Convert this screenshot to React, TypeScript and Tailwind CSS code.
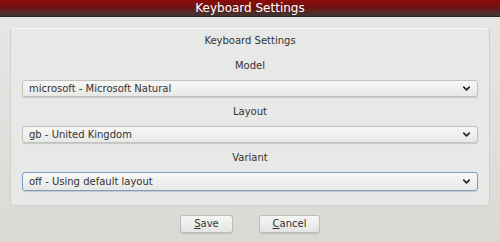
import { ChevronDown } from 'lucide-react';

const font = { fontFamily: '"DejaVu Sans", "Liberation Sans", sans-serif' };

function Select({ value, focused = false }: { value: string; focused?: boolean }) {
  return (
    <div
      className={`flex items-center justify-between rounded-[3px] bg-gradient-to-b from-[#f7f7f6] to-[#e8e8e7] pl-[6px] pr-[5px] shadow-[0_1px_1px_rgba(0,0,0,0.15)] ${
        focused ? 'border-[1.5px] border-[#7a9cc8] h-[19px]' : 'border border-[#c2c2c0] h-[17px]'
      }`}
    >
      <span className="text-[10px] leading-none text-[#333]">{value}</span>
      <ChevronDown className="w-[11px] h-[11px] text-[#222]" strokeWidth={3.5} />
    </div>
  );
}

function Label({ text }: { text: string }) {
  return (
    <div className="h-[29px] flex items-center justify-center text-[10px] text-[#333]">{text}</div>
  );
}

function Button({ first, rest }: { first: string; rest: string }) {
  return (
    <button className="h-[18px] rounded-[3px] border border-[#bdbdbb] bg-gradient-to-b from-[#f6f6f5] to-[#e4e4e3] text-[10px] leading-none text-[#333] shadow-[0_1px_1px_rgba(0,0,0,0.12)]">
      <span className="underline">{first}</span>
      {rest}
    </button>
  );
}

export default function App() {
  return (
    <div className="w-[500px] h-[242px] flex flex-col bg-[#dcdbd8]" style={font}>
      {/* Title bar */}
      <div className="h-[17px] flex items-center justify-center bg-gradient-to-b from-[#8e0a0a] via-[#6a1212] to-[#3b3434] border-b border-[#2a2626] text-[12px] text-white leading-none">
        Keyboard Settings
      </div>

      <div className="flex-1 flex flex-col bg-gradient-to-b from-[#e6e6e4] to-[#dad9d6] pt-[11px] px-[10px]">
        {/* Settings panel */}
        <div className="rounded-[3px] border border-[#cfcfcd] border-t-[#f4f4f3] bg-[#e8e8e7] px-[11px] pb-[14px]">
          <div className="h-[22px] flex justify-center pt-[4px] text-[10px] text-[#333]">
            Keyboard Settings
          </div>
          <Label text="Model" />
          <Select value="microsoft - Microsoft Natural" />
          <Label text="Layout" />
          <Select value="gb - United Kingdom" />
          <Label text="Variant" />
          <Select value="off - Using default layout" focused />
        </div>

        <div className="flex justify-center gap-[26px] mt-[9px]">
          <div className="w-[53px] flex flex-col">
            <Button first="S" rest="ave" />
          </div>
          <div className="w-[61px] flex flex-col">
            <Button first="C" rest="ancel" />
          </div>
        </div>
      </div>
    </div>
  );
}
